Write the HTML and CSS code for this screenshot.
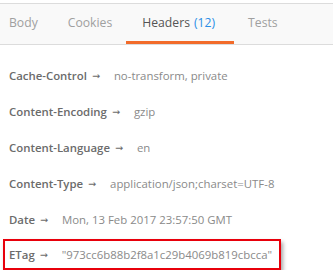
FILE: index.html
```html
<!DOCTYPE html>
<html>
<head>
<meta charset="utf-8">
<link rel="stylesheet" href="styles.css">
</head>
<body>
<div class="tabs">
  <div class="tab first">Body</div>
  <div class="tab">Cookies</div>
  <div class="tab active">Headers <span class="count">(12)</span></div>
  <div class="tab last">Tests</div>
</div>
<div class="headers">
  <div class="row"><span class="key">Cache-Control</span><span class="arrow">→</span><span class="val">no-transform, private</span></div>
  <div class="row"><span class="key">Content-Encoding</span><span class="arrow">→</span><span class="val">gzip</span></div>
  <div class="row"><span class="key">Content-Language</span><span class="arrow">→</span><span class="val">en</span></div>
  <div class="row"><span class="key">Content-Type</span><span class="arrow">→</span><span class="val">application/json;charset=UTF-8</span></div>
  <div class="row"><span class="key">Date</span><span class="arrow">→</span><span class="val">Mon, 13 Feb 2017 23:57:50 GMT</span></div>
  <div class="row highlight"><span class="key">ETag</span><span class="arrow">→</span><span class="val">"973cc6b88b2f8a1c29b4069b819cbcca"</span></div>
</div>
</body>
</html>
```

FILE: styles.css
```css
* { box-sizing: border-box; }
html, body { margin: 0; padding: 0; background: #fff; }
body {
  font-family: "Open Sans", "Noto Sans", sans-serif;
  font-size: 11.4px;
  color: #808080;
  padding-top: 3px;
  white-space: nowrap;
}
.tabs {
  display: flex;
  background: #f9f9f9;
  border-top: 1px solid #dcdcdc;
  border-bottom: 1px solid #dcdcdc;
  height: 42px;
}
.tab {
  height: 40px;
  display: flex;
  align-items: center;
  padding: 0 14px 0 16px;
  color: #a0a0a0;
  font-size: 12.2px;
  border-bottom: 3px solid transparent;
}
.tab.first { padding-left: 9px; }
.tab.last { padding-left: 14px; }
.tab.active {
  color: #555;
  border-bottom-color: #f26b2a;
  padding: 0 19px 0 16px;
}
.count { color: #2c8ee6; margin-left: 4px; }
.headers {
  display: flex;
  flex-direction: column;
  padding: 12px 0 0 3px;
}
.row {
  display: flex;
  align-items: center;
  height: 36px;
  padding-left: 6px;
  width: 278px;
}
.key {
  font-weight: 600;
  color: #6b6b6b;
}
.arrow {
  font-family: "DejaVu Sans", sans-serif;
  font-size: 9.5px;
  color: #6b6b6b;
  margin: 0 14px 0 5px;
}
.val { color: #8a8a8a; }
.highlight {
  height: 31px;
  border: 2px solid #e8000b;
  padding-left: 4px;
  box-shadow: 2px 3px 4px rgba(0,0,0,0.35);
  margin-top: 2px;
}
```
